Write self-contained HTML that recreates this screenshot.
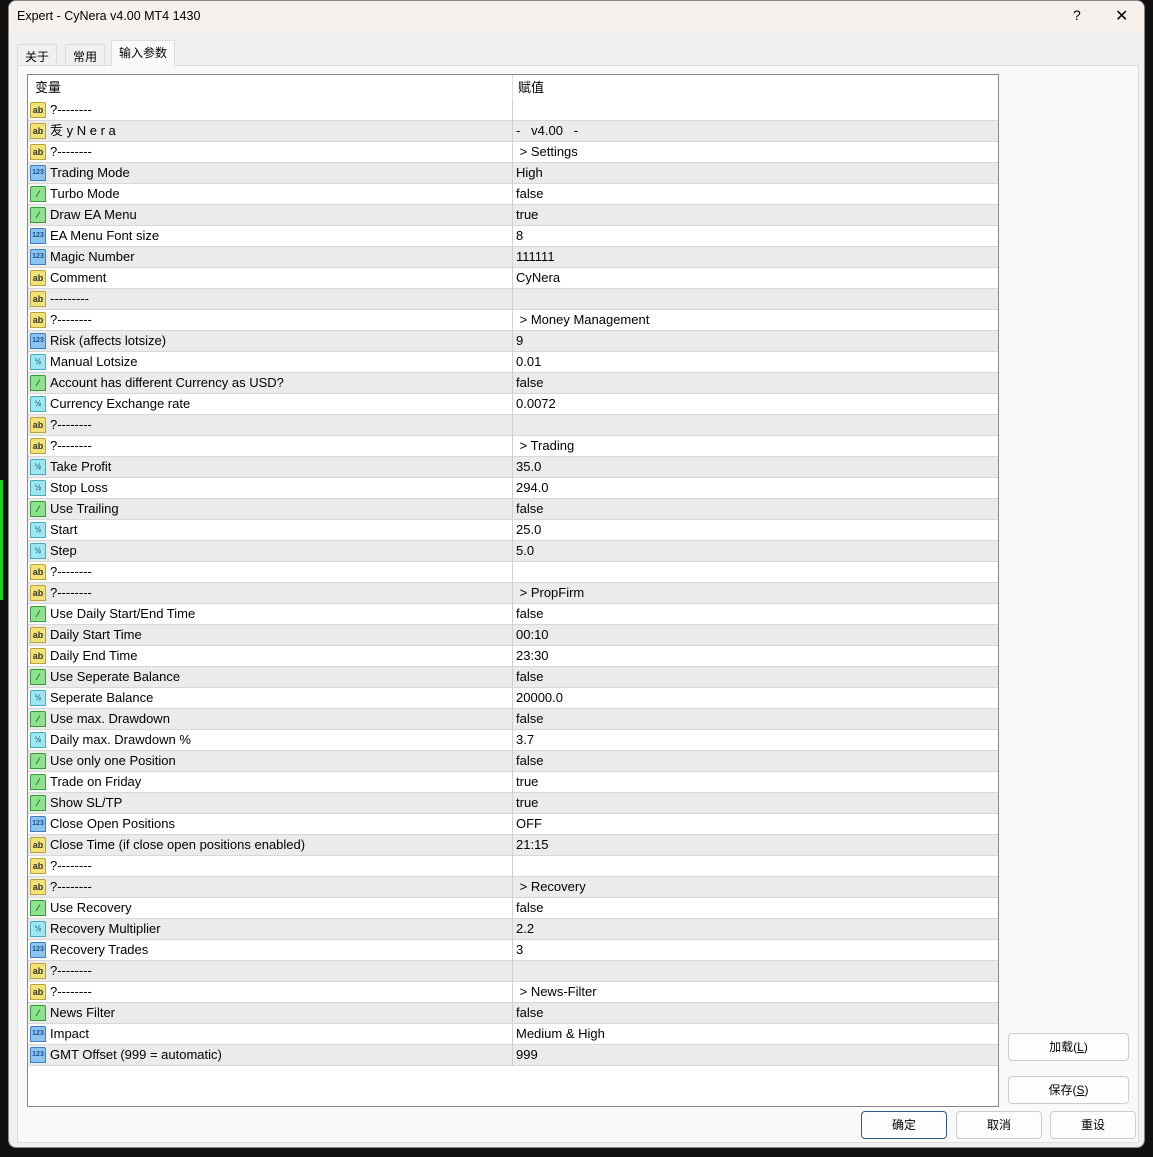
<!DOCTYPE html>
<html><head><meta charset="utf-8"><style>
*{margin:0;padding:0;box-sizing:border-box}
body{width:1153px;height:1157px;background:#111;position:relative;overflow:hidden;font-family:"Liberation Sans","Noto Sans CJK SC",sans-serif;font-size:13px;color:#000}
.win{position:absolute;left:8px;top:0;width:1137px;height:1148px;background:#f0f0f0;border-radius:8px;overflow:hidden;border:1px solid #888}
.title{position:absolute;left:0;top:0;right:0;height:32px;background:#f7f1ee}
.title span{position:absolute;left:8px;top:8px;font-size:12.5px}
.tab{position:absolute;top:42px;height:22px;font-size:12px;padding:3px 7px;border:1px solid #ddd;border-bottom:none;background:#f0f0f0}
.panel{position:absolute;left:8px;top:64px;width:1122px;height:1078px;background:#f9f9f9;border:1px solid #ddd}
.grid{position:absolute;left:27px;top:74px;width:972px;height:1033px;background:#fff;border:1px solid #888}
.row{position:absolute;left:0;width:970px;height:21px;border-bottom:1px solid #d8d8d8;font-size:13px;line-height:20px}
.row.g{background:#ebebeb}
.row .n{position:absolute;left:22px}
.row .v{position:absolute;left:488px}
.row .d{position:absolute;left:484px;top:0;height:21px;border-left:1px solid #d0d0d0}
.ic{position:absolute;left:2px;top:2px;width:16px;height:16px;border:1px solid;border-radius:2px 2px 0 0;font-size:9px;line-height:14px;text-align:center;font-weight:bold}
.ab{background:#f3e27a;border-color:#b9a53a;color:#333}
.n1{background:#8fc3ef;border-color:#3e7fc0;color:#1a4f90;font-size:7px}
.bo{background:#8fe08f;border-color:#3a9a3a;color:#1a5a1a}
.fr{background:#9ee6f2;border-color:#4aaabb;color:#24707d;font-size:8px}
.btn{position:absolute;height:28px;background:#fdfdfd;border:1px solid #ccc;border-radius:4px;font-size:12px;text-align:center;line-height:26px}
.hdr{position:absolute;left:0;top:0;width:970px;height:25px;font-size:13px;line-height:25px}
</style></head><body>
<div style="position:absolute;left:0;top:480px;width:3px;height:120px;background:#2c2"></div>
<div class="win">
<div class="title"><span>Expert - CyNera v4.00 MT4 1430</span><span style="left:1064px;font-size:14px;top:6px">?</span><span style="left:1106px;font-size:16px;top:5px">✕</span></div>
<div class="tab" style="left:8px;top:43px;height:21px">关于</div>
<div class="tab" style="left:56px;top:43px;height:21px">常用</div>
<div class="tab" style="left:102px;top:39px;height:26px;background:#f9f9f9;z-index:2">输入参数</div>
<div class="panel"></div>
</div>
<div class="grid">
<div class="hdr"><span style="position:absolute;left:7px">变量</span><span style="position:absolute;left:490px">赋值</span><div style="position:absolute;left:484px;top:0;height:25px;border-left:1px solid #ddd"></div></div>
<div id="rows"></div>
</div>
<div class="btn" style="left:1008px;top:1033px;width:121px">加载(<u>L</u>)</div>
<div class="btn" style="left:1008px;top:1076px;width:121px">保存(<u>S</u>)</div>
<div class="btn" style="left:861px;top:1111px;width:86px;border:1px solid #2a5b8a">确定</div>
<div class="btn" style="left:956px;top:1111px;width:86px">取消</div>
<div class="btn" style="left:1050px;top:1111px;width:86px">重设</div>
<script>
var d=[["ab","?--------",""],["ab","叐 y N e r a","-&nbsp;&nbsp;&nbsp;v4.00&nbsp;&nbsp;&nbsp;-"],["ab","?--------","&nbsp;&gt; Settings"],["n1","Trading Mode","High"],["bo","Turbo Mode","false"],["bo","Draw EA Menu","true"],["n1","EA Menu Font size","8"],["n1","Magic Number","111111"],["ab","Comment","CyNera"],["ab","---------",""],["ab","?--------","&nbsp;&gt; Money Management"],["n1","Risk (affects lotsize)","9"],["fr","Manual Lotsize","0.01"],["bo","Account has different Currency as USD?","false"],["fr","Currency Exchange rate","0.0072"],["ab","?--------",""],["ab","?--------","&nbsp;&gt; Trading"],["fr","Take Profit","35.0"],["fr","Stop Loss","294.0"],["bo","Use Trailing","false"],["fr","Start","25.0"],["fr","Step","5.0"],["ab","?--------",""],["ab","?--------","&nbsp;&gt; PropFirm"],["bo","Use Daily Start/End Time","false"],["ab","Daily Start Time","00:10"],["ab","Daily End Time","23:30"],["bo","Use Seperate Balance","false"],["fr","Seperate Balance","20000.0"],["bo","Use max. Drawdown","false"],["fr","Daily max. Drawdown %","3.7"],["bo","Use only one Position","false"],["bo","Trade on Friday","true"],["bo","Show SL/TP","true"],["n1","Close Open Positions","OFF"],["ab","Close Time (if close open positions enabled)","21:15"],["ab","?--------",""],["ab","?--------","&nbsp;&gt; Recovery"],["bo","Use Recovery","false"],["fr","Recovery Multiplier","2.2"],["n1","Recovery Trades","3"],["ab","?--------",""],["ab","?--------","&nbsp;&gt; News-Filter"],["bo","News Filter","false"],["n1","Impact","Medium &amp; High"],["n1","GMT Offset (999 = automatic)","999"]];
var lab={ab:"ab",n1:"123",bo:"⁄",fr:"½"},h="";
d.forEach(function(r,i){h+='<div class="row'+(i%2?' g':'')+'" style="top:'+(25+i*21)+'px"><div class="ic '+r[0]+'">'+lab[r[0]]+'</div><span class="n">'+r[1]+'</span><div class="d"></div><span class="v">'+r[2]+'</span></div>';});
document.getElementById('rows').innerHTML=h;
</script>
</body></html>
